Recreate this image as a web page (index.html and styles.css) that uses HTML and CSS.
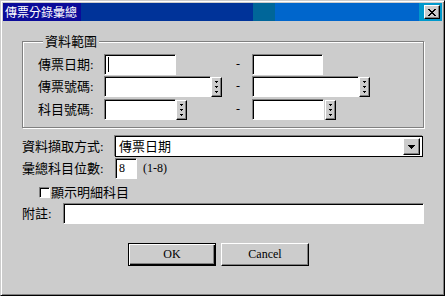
FILE: index.html
```html
<!DOCTYPE html>
<html lang="zh-Hant">
<head>
    <meta charset="UTF-8">
    <meta name="viewport" content="width=device-width, initial-scale=1.0">
    <title>傳票分錄彙總</title>
    <link rel="stylesheet" href="styles.css">
</head>
<body>

<div class="dialog">

    <!-- Title bar -->
    <div class="titlebar">
        <span class="title">傳票分錄彙總</span>
        <button class="close" type="button">
            <svg width="8" height="7" viewBox="0 0 8 7" shape-rendering="crispEdges">
                <path d="M0 0h2v1h-2zM6 0h2v1h-2zM1 1h2v1h-2zM5 1h2v1h-2zM2 2h4v1h-4zM3 3h2v1h-2zM2 4h4v1h-4zM1 5h2v1h-2zM5 5h2v1h-2zM0 6h2v1h-2zM6 6h2v1h-2z" fill="#000"/>
            </svg>
        </button>
    </div>

    <div class="content">

        <!-- Range group -->
        <fieldset class="range">
            <legend>資料範圍</legend>
            <div class="range-row">
                <span class="range-label">傳票日期:</span>
                <div class="range-cell"><div class="edit w72"><i class="caret"></i></div></div>
                <span class="dash">-</span>
                <div class="range-cell"><div class="edit w71"></div></div>
            </div>
            <div class="range-row">
                <span class="range-label">傳票號碼:</span>
                <div class="range-cell"><div class="edit w107"></div><span class="spin"></span></div>
                <span class="dash">-</span>
                <div class="range-cell"><div class="edit w107"></div><span class="spin"></span></div>
            </div>
            <div class="range-row row-last">
                <span class="range-label">科目號碼:</span>
                <div class="range-cell"><div class="edit w72"></div><span class="spin"></span></div>
                <span class="dash">-</span>
                <div class="range-cell"><div class="edit w72"></div><span class="spin gap"></span></div>
            </div>
        </fieldset>

        <!-- Options -->
        <div class="form-row row-select">
            <span class="form-label">資料擷取方式:</span>
            <div class="combo">
                <span class="combo-text">傳票日期</span>
                <span class="combo-btn">
                    <svg width="7" height="4" viewBox="0 0 7 4" shape-rendering="crispEdges"><path d="M0 0h7v1h-1v1h-1v1h-1v1h-1v-1h-1v-1h-1v-1h-1z" fill="#000"/></svg>
                </span>
            </div>
        </div>

        <div class="form-row row-digits">
            <span class="form-label">彙總科目位數:</span>
            <div class="edit w22 latin">8</div>
            <span class="hint latin">(1-8)</span>
        </div>

        <label class="check-row">
            <span class="checkbox"></span>
            <span>顯示明細科目</span>
        </label>

        <div class="form-row row-note">
            <span class="form-label note-label">附註:</span>
            <div class="edit note"></div>
        </div>

        <div class="buttons">
            <button class="btn btn-default" type="button">OK</button>
            <button class="btn" type="button">Cancel</button>
        </div>

    </div>
</div>

</body>
</html>
```

FILE: styles.css
```css
body {
    margin: 0;
    background-color: #cccccc;
    font-family: "Liberation Serif", "Noto Sans CJK TC", serif;
    font-size: 13px;
    line-height: 15px;
    color: #000;
}
.dialog {
    width: 445px;
    height: 296px;
    box-sizing: border-box;
    border: 1px solid;
    border-color: #cccccc #000 #000 #cccccc;
    box-shadow: inset 1px 1px #fff, inset -1px -1px #808080;
    padding: 2px;
    background-color: #cccccc;
    display: flex;
    flex-direction: column;
}

/* Title bar */
.titlebar {
    height: 18px;
    display: flex;
    align-items: center;
    justify-content: space-between;
    background: linear-gradient(to right,
        #003399 0, #003399 250px,
        #006699 250px, #006699 272px,
        #0066cc 272px, #0066cc 416px,
        #0099cc 416px);
}
.title {
    height: 18px;
    line-height: 18px;
    padding: 0 4px 0 2px;
    background-color: #0b0b99;
    color: #fff;
    font-family: "Noto Sans CJK TC", sans-serif;
    font-size: 12px;
}
.close {
    width: 16px;
    height: 14px;
    margin-right: 2px;
    padding: 0;
    border: 1px solid;
    border-color: #fff #000 #000 #fff;
    box-shadow: inset -1px -1px #808080;
    background-color: #cccccc;
    display: flex;
    align-items: center;
    justify-content: center;
}
.close svg {
    display: block;
}

.content {
    padding: 13px 18px 0 16px;
    display: flex;
    flex-direction: column;
}

/* Sunken edit box */
.edit {
    box-sizing: border-box;
    height: 21px;
    border: 1px solid;
    border-color: #808080 #fff #fff #808080;
    box-shadow: inset 1px 1px #000;
    background-color: #fff;
    padding: 2px 3px;
    display: flex;
    align-items: center;
}
.w22 { width: 22px; }
.w71 { width: 71px; }
.w72 { width: 72px; }
.w107 { width: 107px; }
.caret {
    width: 1px;
    height: 15px;
    background-color: #000;
}
.latin {
    font-family: "Liberation Serif", serif;
    font-size: 12px;
}

/* Range group */
.range {
    margin: 0 0 0 3px;
    padding: 5px 0 7px 15px;
    border: 1px solid #808080;
    box-shadow: inset 1px 1px #fff, 1px 1px #fff;
    display: flex;
    flex-direction: column;
    gap: 1px;
}
.range legend {
    margin-left: 5px;
    padding: 0 2px;
    background-color: #cccccc;
    line-height: 15px;
}
.range-row {
    display: flex;
    align-items: center;
    height: 21px;
}
.row-last {
    margin-top: 1px;
}
.range-label {
    width: 66px;
}
.range-cell {
    width: 132px;
    display: flex;
    align-items: center;
}
.range-cell:last-child {
    width: auto;
}
.dash {
    width: 16px;
    font-size: 12px;
}

/* Spinner button */
.spin {
    box-sizing: border-box;
    width: 11px;
    height: 20px;
    border: 1px solid;
    border-color: #fff #000 #000 #fff;
    box-shadow: inset -1px -1px #808080;
    background:
        linear-gradient(#000, #000) 3px 3px / 3px 1px no-repeat,
        linear-gradient(#000, #000) 4px 4px / 1px 1px no-repeat,
        linear-gradient(#000, #000) 3px 8px / 3px 1px no-repeat,
        linear-gradient(#000, #000) 4px 9px / 1px 1px no-repeat,
        linear-gradient(#000, #000) 3px 13px / 3px 1px no-repeat,
        linear-gradient(#000, #000) 4px 14px / 1px 1px no-repeat,
        #cccccc;
}
.spin.gap {
    margin-left: 1px;
}

/* Option rows */
.form-row {
    display: flex;
    align-items: center;
    height: 21px;
}
.form-label {
    width: 96px;
    padding-left: 3px;
    box-sizing: border-box;
}
.row-select {
    margin-top: 8px;
}
.row-digits {
    margin-top: 1px;
}
.combo {
    box-sizing: border-box;
    width: 308px;
    height: 21px;
    border: 1px solid #000;
    box-shadow: -1px -1px #808080;
    background-color: #fff;
    padding: 1px 2px 1px 3px;
    display: flex;
    align-items: center;
    justify-content: space-between;
}
.combo-btn {
    box-sizing: border-box;
    width: 17px;
    height: 17px;
    border: 1px solid;
    border-color: #fff #000 #000 #fff;
    box-shadow: inset -1px -1px #808080;
    background-color: #cccccc;
    display: flex;
    align-items: center;
    justify-content: center;
}
.combo-btn svg {
    display: block;
}
.hint {
    margin-left: 6px;
}
.check-row {
    margin: 7px 0 0 20px;
    height: 13px;
    display: flex;
    align-items: center;
    gap: 1px;
}
.checkbox {
    box-sizing: border-box;
    width: 11px;
    height: 11px;
    border: 1px solid;
    border-color: #808080 #fff #fff #808080;
    box-shadow: inset 1px 1px #000;
    background-color: #fff;
}
.row-note {
    margin-top: 4px;
}
.note-label {
    width: 44px;
}
.note {
    flex: 1;
}

/* Push buttons */
.buttons {
    margin-top: 19px;
    padding-right: 6px;
    display: flex;
    justify-content: center;
    gap: 5px;
}
.btn {
    box-sizing: border-box;
    width: 88px;
    height: 23px;
    padding: 0;
    border: 1px solid;
    border-color: #fff #000 #000 #fff;
    box-shadow: inset -1px -1px #808080;
    background-color: #cccccc;
    font-family: "Liberation Serif", serif;
    font-size: 12px;
    color: #000;
}
.btn-default {
    border-color: #000;
    box-shadow: inset 1px 1px #fff, inset -1px -1px #000, inset -2px -2px #808080;
}
```
